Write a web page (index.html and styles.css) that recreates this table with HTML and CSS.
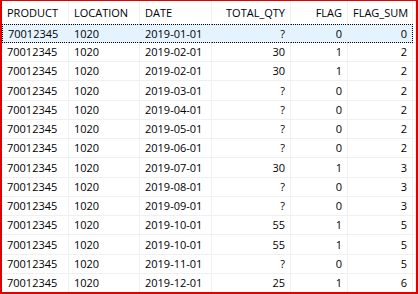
FILE: index.html
```html
<!DOCTYPE html>
<html lang="en">
<head>
  <meta charset="UTF-8">
  <title>Query result</title>
  <link rel="stylesheet" href="styles.css">
</head>
<body>
  <div class="grid-frame">
    <table class="result-grid">
      <colgroup>
        <col class="c-product">
        <col class="c-location">
        <col class="c-date">
        <col class="c-qty">
        <col class="c-flag">
        <col class="c-sum">
        <col class="c-fill">
      </colgroup>
      <thead>
        <tr>
          <th>PRODUCT</th>
          <th>LOCATION</th>
          <th>DATE</th>
          <th class="num">TOTAL_QTY</th>
          <th class="num">FLAG</th>
          <th class="num">FLAG_SUM</th>
          <th></th>
        </tr>
      </thead>
      <tbody>
        <tr class="focused">
          <td>70012345</td><td>1020</td><td>2019-01-01</td><td class="num">?</td><td class="num">0</td><td class="num">0</td><td></td>
        </tr>
        <tr>
          <td>70012345</td><td>1020</td><td>2019-02-01</td><td class="num">30</td><td class="num">1</td><td class="num">2</td><td></td>
        </tr>
        <tr>
          <td>70012345</td><td>1020</td><td>2019-02-01</td><td class="num">30</td><td class="num">1</td><td class="num">2</td><td></td>
        </tr>
        <tr>
          <td>70012345</td><td>1020</td><td>2019-03-01</td><td class="num">?</td><td class="num">0</td><td class="num">2</td><td></td>
        </tr>
        <tr>
          <td>70012345</td><td>1020</td><td>2019-04-01</td><td class="num">?</td><td class="num">0</td><td class="num">2</td><td></td>
        </tr>
        <tr>
          <td>70012345</td><td>1020</td><td>2019-05-01</td><td class="num">?</td><td class="num">0</td><td class="num">2</td><td></td>
        </tr>
        <tr>
          <td>70012345</td><td>1020</td><td>2019-06-01</td><td class="num">?</td><td class="num">0</td><td class="num">2</td><td></td>
        </tr>
        <tr>
          <td>70012345</td><td>1020</td><td>2019-07-01</td><td class="num">30</td><td class="num">1</td><td class="num">3</td><td></td>
        </tr>
        <tr>
          <td>70012345</td><td>1020</td><td>2019-08-01</td><td class="num">?</td><td class="num">0</td><td class="num">3</td><td></td>
        </tr>
        <tr>
          <td>70012345</td><td>1020</td><td>2019-09-01</td><td class="num">?</td><td class="num">0</td><td class="num">3</td><td></td>
        </tr>
        <tr>
          <td>70012345</td><td>1020</td><td>2019-10-01</td><td class="num">55</td><td class="num">1</td><td class="num">5</td><td></td>
        </tr>
        <tr>
          <td>70012345</td><td>1020</td><td>2019-10-01</td><td class="num">55</td><td class="num">1</td><td class="num">5</td><td></td>
        </tr>
        <tr>
          <td>70012345</td><td>1020</td><td>2019-11-01</td><td class="num">?</td><td class="num">0</td><td class="num">5</td><td></td>
        </tr>
        <tr>
          <td>70012345</td><td>1020</td><td>2019-12-01</td><td class="num">25</td><td class="num">1</td><td class="num">6</td><td></td>
        </tr>
      </tbody>
    </table>
  </div>
</body>
</html>
```
FILE: styles.css
```css
* { box-sizing: border-box; }
body {
  margin: 0;
  background: #fff;
  font-family: 'Open Sans', 'Noto Sans', sans-serif;
  font-size: 11px;
  color: #000;
}

.grid-frame {
  width: 418px;
  height: 294px;
  border: 2px solid #e00000;
  border-top-width: 1px;
  overflow: hidden;
}

.result-grid {
  table-layout: fixed;
  border-collapse: separate;
  border-spacing: 0;
  width: 414px;
}

.c-product { width: 67px; }
.c-location { width: 71px; }
.c-date { width: 72px; }
.c-qty { width: 79px; }
.c-flag { width: 57px; }
.c-sum { width: 65px; }
.c-fill { width: 3px; }

th, td {
  padding: 0 5px;
  white-space: nowrap;
  overflow: hidden;
  text-align: left;
  font-weight: normal;
  border-right: 1px solid #f0f0f0;
}

th {
  height: 23px;
  line-height: 22px;
}

td {
  height: 19px;
  line-height: 18px;
  border-bottom: 1px solid #f0f0f0;
}

tbody tr:nth-child(4n) td {
  height: 20px;
}

th:last-child, td:last-child {
  padding: 0;
}

.num {
  text-align: right;
}

.focused td {
  background: #e5f3ff;
  border-top: 1px dotted #000;
  border-bottom: 1px dotted #000;
  height: 19px;
  line-height: 17px;
}

.focused td:first-child {
  border-left: 1px dotted #000;
}

.focused td:nth-child(6) {
  border-right: 1px dotted #000;
}

.focused td:last-child {
  background: #fff;
  border-top: 0;
  border-bottom: 1px solid #f0f0f0;
}
```
